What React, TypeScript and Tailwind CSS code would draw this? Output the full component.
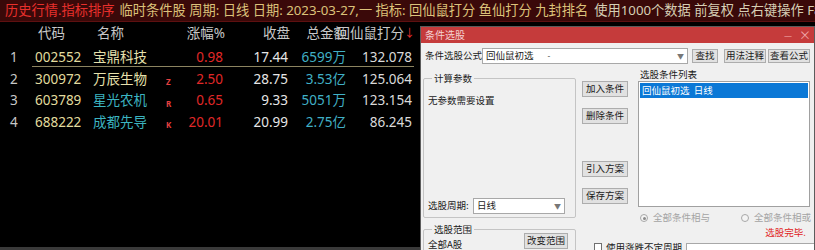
import React from 'react'

// 行情列表数据
type Row = {
  idx: number
  code: string
  name: string
  cyan: boolean
  mark: string
  pct: string
  close: string
  amount: string
  score: string
}

const rows: Row[] = [
  { idx: 1, code: '002552', name: '宝鼎科技', cyan: false, mark: '', pct: '0.98', close: '17.44', amount: '6599万', score: '132.078' },
  { idx: 2, code: '300972', name: '万辰生物', cyan: false, mark: 'Z', pct: '2.50', close: '28.75', amount: '3.53亿', score: '125.064' },
  { idx: 3, code: '603789', name: '星光农机', cyan: true, mark: 'R', pct: '0.65', close: '9.33', amount: '5051万', score: '123.154' },
  { idx: 4, code: '688222', name: '成都先导', cyan: true, mark: 'K', pct: '20.01', close: '20.99', amount: '2.75亿', score: '86.245' },
]

// 对话框按钮
function WinButton({ label, className = '' }: { label: string; className?: string }) {
  return (
    <div
      className={`flex items-center justify-center bg-[#e1e1e1] border border-[#adadad] text-[9.5px] leading-none text-[#1a1a1a] whitespace-nowrap ${className}`}
    >
      {label}
    </div>
  )
}

// 单选框
function Radio({ checked }: { checked?: boolean }) {
  return (
    <span className="shrink-0 w-[8px] h-[8px] rounded-full border border-[#a8a8a8] bg-[#f4f4f4] flex items-center justify-center">
      {checked && <span className="w-[3px] h-[3px] rounded-full bg-[#8a8a8a]" />}
    </span>
  )
}

// 条件选股对话框
function ConditionDialog() {
  return (
    <div className="absolute left-[420px] top-[26px] w-[395px] h-[226px] border border-[#5c5c5c] bg-[#f0f0f0] overflow-hidden whitespace-nowrap font-[family-name:Noto_Sans_CJK_SC,sans-serif] text-[9.5px] text-[#1a1a1a]">
      {/* 标题栏 */}
      <div className="h-[16px] bg-[#c53b3b] flex items-center justify-between pl-[4px] pr-[3px] text-[#f4d2d2] text-[10px] leading-none">
        <span>条件选股</span>
        <div className="flex items-center gap-[7px] text-[#f0a8a8]">
          <span className="text-[9px]">—</span>
          <span className="text-[12px]">×</span>
        </div>
      </div>

      {/* 公式行 */}
      <div className="flex items-center h-[16px] mt-[5px] pl-[4px]">
        <span className="w-[57px] leading-none">条件选股公式</span>
        <div className="w-[206px] h-[16px] bg-white border border-[#a8a8a8] flex items-center justify-between pl-[3px] pr-[3px]">
          <span className="leading-none">
            回仙鼠初选<span className="ml-[14px] text-[8px]">-</span>
          </span>
          <span className="text-[7px] text-[#777] leading-none">▼</span>
        </div>
        <WinButton label="查找" className="ml-[4px] w-[26px] h-[14px]" />
        <WinButton label="用法注释" className="ml-[6px] w-[42px] h-[14px]" />
        <WinButton label="查看公式" className="ml-[2px] w-[42px] h-[14px]" />
      </div>

      <div className="flex pl-[2px]">
        {/* 左侧参数区 */}
        <div className="w-[153px] shrink-0 mt-[8px] flex flex-col">
          <fieldset className="border border-[#c4c4c4] rounded-[2px] px-[4px]">
            <legend className="ml-[4px] px-[2px] leading-[12px]">计算参数</legend>
            <div className="h-[133px] flex flex-col justify-between pb-[3px]">
              <div className="mt-[12px] leading-none">无参数需要设置</div>
              <div className="flex items-center">
                <span className="w-[45px] leading-none">选股周期:</span>
                <div className="w-[92px] h-[16px] bg-white border border-[#a8a8a8] flex items-center justify-between pl-[3px] pr-[3px]">
                  <span className="leading-none">日线</span>
                  <span className="text-[7px] text-[#777] leading-none">▼</span>
                </div>
              </div>
            </div>
          </fieldset>
          <fieldset className="mt-[5px] border border-[#c4c4c4] rounded-[2px] px-[4px]">
            <legend className="ml-[4px] px-[2px] leading-[12px]">选股范围</legend>
            <div className="h-[30px] flex items-start justify-between">
              <span className="mt-[5px] leading-none">全部A股</span>
              <WinButton label="改变范围" className="-mt-[2px] w-[44px] h-[16px] mr-[3px]" />
            </div>
          </fieldset>
        </div>

        {/* 右侧按钮与列表 */}
        <div className="ml-[6px] w-[228px] shrink-0 flex flex-col">
          <div className="flex">
            <div className="w-[46px] shrink-0 flex flex-col">
              <WinButton label="加入条件" className="mt-[17px] h-[16px]" />
              <WinButton label="删除条件" className="mt-[11px] h-[16px]" />
              <WinButton label="引入方案" className="mt-[37px] h-[16px]" />
              <WinButton label="保存方案" className="mt-[11px] h-[16px]" />
            </div>
            <div className="ml-[10px] w-[172px] shrink-0 mt-[4px] flex flex-col">
              <span className="h-[12px] leading-[12px] pl-[2px]">选股条件列表</span>
              <div className="mt-[1px] h-[126px] bg-white border border-[#a0a0a0] p-[1px]">
                <div className="h-[15px] bg-[#0b78d6] text-white flex items-center pl-[2px] leading-none">
                  回仙鼠初选&nbsp;&nbsp;日线
                </div>
              </div>
            </div>
          </div>
          <div className="ml-[58px] mt-[6px] h-[10px] flex items-center text-[#a4a4a4] leading-none">
            <Radio checked />
            <span className="ml-[5px]">全部条件相与</span>
            <span className="ml-[31px]">
              <Radio />
            </span>
            <span className="ml-[5px]">全部条件相或</span>
          </div>
          <div className="mt-[5px] h-[10px] text-right pr-[4px] text-[#e02424] leading-none">选股完毕.</div>
          <div className="mt-[3px] flex items-start pl-[12px]">
            <span className="shrink-0 mt-[2px] w-[8px] h-[8px] border border-[#707070] bg-white" />
            <span className="ml-[4px] mt-[2px] leading-none">使用涨跌不定周期</span>
            <div className="ml-[4px] mt-[2px] w-[142px] shrink-0 h-[16px] bg-white border border-[#a8a8a8]" />
          </div>
        </div>
      </div>
    </div>
  )
}

export default function App() {
  return (
    <div className="relative w-[815px] h-[250px] overflow-hidden bg-black flex flex-col font-[family-name:Noto_Sans,Noto_Sans_CJK_SC,sans-serif] text-[13.5px]">
      {/* 顶部信息栏 */}
      <div className="h-[22px] shrink-0 bg-[#3a0909] border-b border-[#5e1010] flex items-center pl-[5px] whitespace-nowrap leading-none text-[13.25px] overflow-hidden">
        <span className="text-[#e8302c]">历史行情.指标排序</span>
        <span className="ml-[5px] text-[#dcc27a]">
          临时条件股 周期: 日线 日期: 2023-03-27,一 指标: 回仙鼠打分 鱼仙打分 九封排名
        </span>
        <span className="ml-[6px] text-[#d6ceb4]">使用1000个数据 前复权 点右键操作 F8</span>
      </div>

      {/* 表头 */}
      <div className="h-[25px] shrink-0 flex pt-[3px] leading-[16px] text-[#c8c8c8] whitespace-nowrap">
        <div className="w-[30px]" />
        <div className="w-[58px] pl-[8px]">代码</div>
        <div className="w-[62px] pl-[9px]">名称</div>
        <div className="w-[30px]" />
        <div className="w-[45px] text-right">涨幅%</div>
        <div className="w-[65px] text-right">收盘</div>
        <div className="w-[57px] text-right">总金额</div>
        <div className="w-[68px] flex justify-end">
          <span>回仙鼠打分</span>
          <span className="text-[#e83030] text-[11px]">↓</span>
        </div>
      </div>

      {/* 数据行 */}
      {rows.map((r) => (
        <div key={r.idx} className="relative h-[21.5px] shrink-0 flex items-center leading-none whitespace-nowrap">
          <div className="w-[30px] pl-[10px] text-[#c8c8c8]">{r.idx}</div>
          <div className="w-[58px] pl-[5px] text-[#e2dc9e]">{r.code}</div>
          <div className={`w-[62px] pl-[5px] ${r.cyan ? 'text-[#3cb4c0]' : 'text-[#e6e0ac]'}`}>{r.name}</div>
          <div className="w-[30px] pl-[16px] pt-[6px] text-[8px] font-bold text-[#e84040]">{r.mark}</div>
          <div className="w-[45px] pr-[2px] text-right text-[#e02828]">{r.pct}</div>
          <div className="w-[65px] pr-[2px] text-right text-[#e6e6e6]">{r.close}</div>
          <div className="w-[57px] pr-[1px] text-right text-[#40b0c6]">{r.amount}</div>
          <div className="w-[68px] pr-[3px] text-right text-[#dadada]">{r.score}</div>
          {r.idx === 1 && <div className="absolute left-[32px] w-[382px] bottom-[2px] h-px bg-[#8c8460]" />}
        </div>
      ))}

      <div className="flex-1" />
      <div className="h-[3px] shrink-0 bg-[#3a3a3a]" />

      <ConditionDialog />
    </div>
  )
}
